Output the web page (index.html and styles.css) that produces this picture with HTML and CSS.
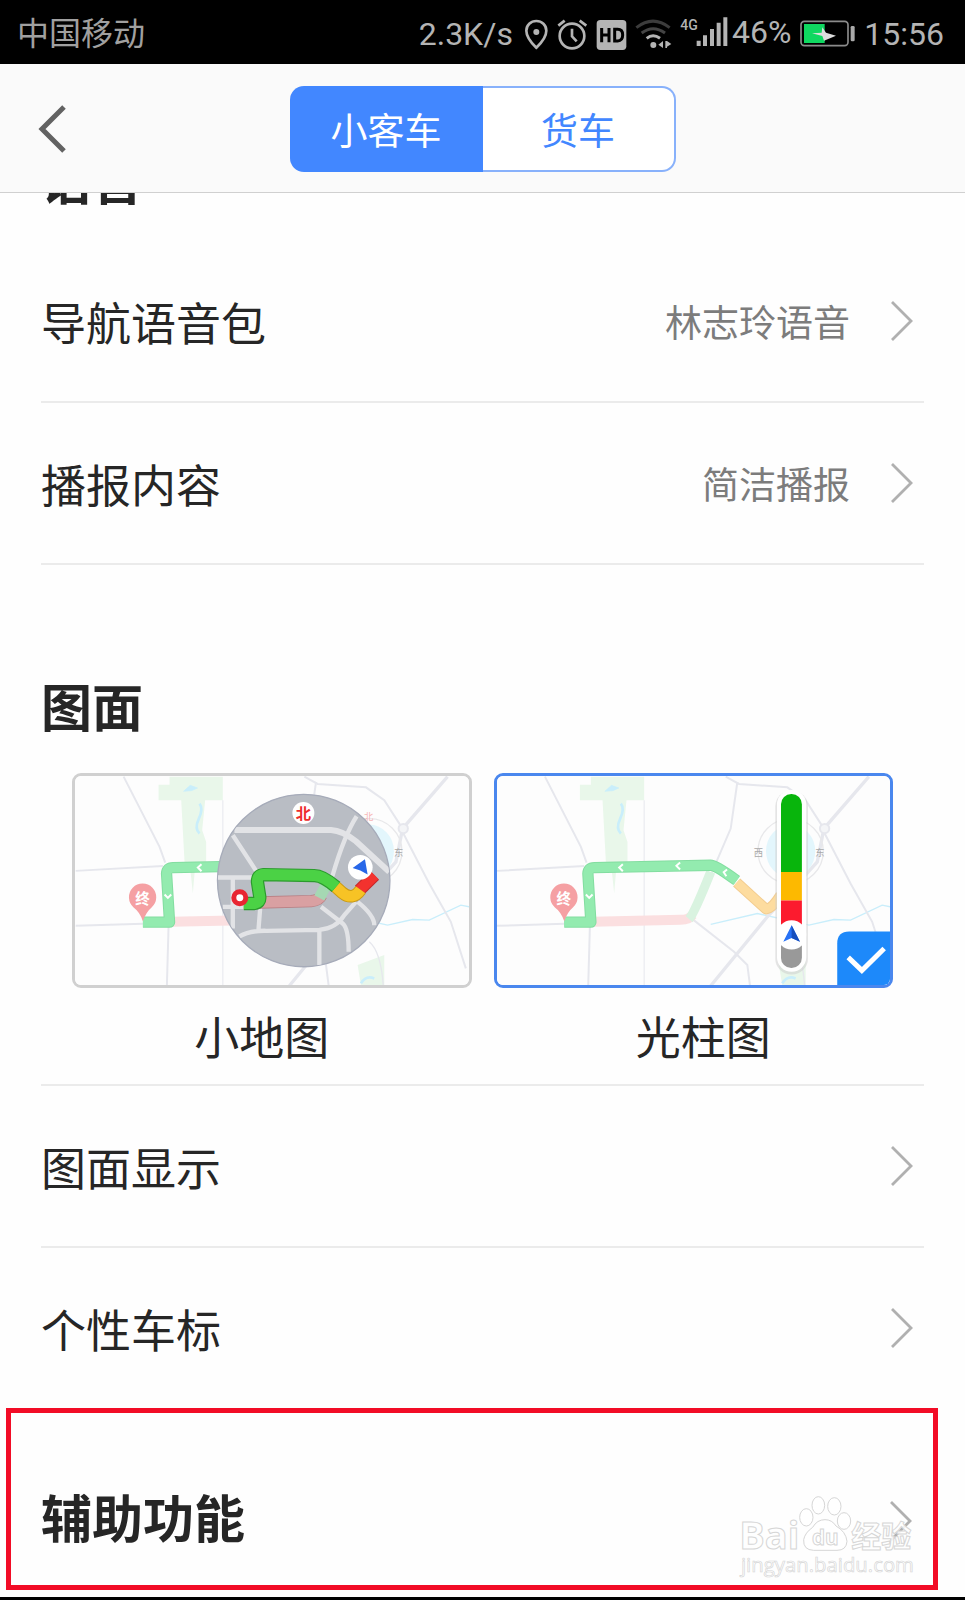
FILE: index.html
```html
<!DOCTYPE html>
<html lang="zh-CN">
<head>
<meta charset="utf-8">
<meta name="viewport" content="width=device-width, initial-scale=1">
<title>导航设置</title>
<link rel="stylesheet" href="styles.css">
</head>
<body>
<svg class="defs" aria-hidden="true">
  <defs>
    <symbol id="chevron" viewBox="0 0 24 44"><path d="M2 3 21 22 2 41" fill="none" stroke="currentColor" stroke-width="2.8"/></symbol>
    <g id="map-base">
      <rect x="39" y="27" width="1204" height="642" fill="#fdfdfd"/>
      <g fill="#e9f7ea">
        <path d="M330 34H490V105H437L428 195 440 230V290H408L400 385 390 290H375L365 105H297V58H330Z"/>
        <path d="M895 600 975 570V662H905Z"/>
      </g>
      <g fill="none" stroke="#c9eefb">
        <path d="M372 78 392 60 414 68 396 76Z" fill="#c9eefb" stroke-width="2"/>
        <path d="M420 115Q432 130 418 160T420 205" stroke-width="8"/>
        <path d="M905 655Q920 630 945 640" stroke-width="8"/>
        <path d="M690 478 830 445 985 480 1060 463 1110 465 1205 420 1230 425" stroke-width="4"/>
      </g>
      <g fill="none" stroke="#e6e7ed" stroke-width="6">
        <path d="M192 34 300 245 317 292M48 317 310 302M48 482 250 476M327 485 322 662M770 50 750 190 690 330 635 462 760 560 800 600 808 662"/>
        <path d="M735 34 775 56 920 66 975 105 1030 190M1030 200 1110 355 1175 470 1220 610"/>
        <path d="M1165 34 1030 190 1010 290 860 455 690 662" stroke-width="10"/>
        <path d="M490 105V662" stroke-width="3"/>
        <circle cx="1032" cy="190" r="14" fill="#f4f5f7"/>
        <path d="M930 530Q965 560 972 662" stroke-width="4"/>
      </g>
      <circle cx="930" cy="258" r="98" fill="none" stroke="#e8e8ea" stroke-width="4"/>
      <ellipse cx="930" cy="258" rx="74" ry="80" fill="#e3f6fc"/>
      <g fill="#aaa" font-size="28" text-anchor="middle">
        <text x="1018" y="271">东</text><text x="833" y="271">西</text>
      </g>
    </g>
    <g id="map-route">
      <path d="M335 470 600 464Q625 464 635 450" fill="none" stroke="#fbdfe0" stroke-width="30"/>
      <path d="M625 462Q640 445 690 320" fill="none" stroke="#d9f3e0" stroke-width="28"/>
      <path d="M768 352 856 432Q875 430 900 390" fill="none" stroke="#f3cd91" stroke-width="32" stroke-linejoin="round"/>
      <path d="M768 352 856 432Q875 430 900 390" fill="none" stroke="#fddc9f" stroke-width="26" stroke-linejoin="round"/>
      <path d="M250 471H330L321 325Q322 307 340 307L690 300Q705 300 768 346" fill="none" stroke="#83dda0" stroke-width="34" stroke-linejoin="round"/>
      <path d="M250 471H330L321 325Q322 307 340 307L690 300Q705 300 768 346" fill="none" stroke="#93ebaf" stroke-width="28" stroke-linejoin="round"/>
      <g fill="none" stroke="#fff" stroke-width="6"><path d="M426 297 415 307 426 318M598 292 587 302 598 313M739 313 729 321 737 333M315 388 325 398 335 388"/></g>
      <path d="M250 468Q240 440 222 427A41 41 0 1 1 276 427Q260 440 250 468Z" fill="#f5a0a3"/>
      <text x="249" y="418" fill="#fff" font-size="44" font-weight="700" text-anchor="middle">终</text>
    </g>
  </defs>
</svg>

<div class="status-bar">
  <span class="carrier">中国移动</span>
  <div class="status-items">
    <span class="speed">2.3K/s</span>
    <svg class="ic-pin" viewBox="372 48 75 96" aria-hidden="true"><path d="M409 137Q379 108 379 86A30 29 0 0 1 439 86Q439 108 409 137Z" fill="none" stroke="currentColor" stroke-width="8"/><circle cx="409" cy="90" r="9" fill="currentColor"/></svg>
    <svg class="ic-alarm" viewBox="474 48 93 96" aria-hidden="true"><g fill="none" stroke="currentColor" stroke-width="8"><circle cx="519" cy="102" r="37"/><path d="M519 80V103L533 118M478 71 497 56M542 56 562 71"/></g></svg>
    <svg class="ic-hd" viewBox="594 48 93 96" aria-hidden="true"><rect x="596" y="54" width="89" height="90" rx="11" fill="currentColor"/><g fill="none" stroke="#000" stroke-width="9"><path d="M611 78V121M633 78V121M611 99H633M650 82H659Q674 82 674 99T659 117H650Z"/></g></svg>
    <svg class="ic-wifi" viewBox="708 48 111 96" aria-hidden="true"><g fill="none" stroke-width="9"><path d="M712 77Q762 38 812 77" stroke="#3c3c3c"/><path d="M728 93Q762 67 798 93" stroke="#444"/><path d="M743 109Q762 94 783 109" stroke="currentColor"/></g><circle cx="763" cy="129" r="9" fill="currentColor"/><path d="M778 128 792 117V138ZM799 117H804V138H799ZM804 117 817 126 804 134Z" fill="currentColor"/></svg>
    <div class="cell">
      <svg class="ic-signal" viewBox="30 48 144 96" role="img" aria-label="4G"><text x="31" y="90" fill="currentColor" font-size="42" font-weight="500">4G</text><path d="M80 122H92V138H80ZM99 106H111V138H99ZM120 87H132V138H120ZM140 68H152V138H140ZM160 52H172V138H160Z" fill="currentColor"/></svg>
      <span>46%</span>
    </div>
    <svg class="ic-battery" viewBox="387 48 171 96" aria-hidden="true"><rect x="393" y="58" width="141" height="73" rx="10" fill="none" stroke="#8b8b8b" stroke-width="5"/><path d="M402 66H464V123H402Z" fill="#0fd860"/><rect x="542" y="72" width="12" height="46" rx="4" fill="#aaa"/><path d="M457 76 468 92 498 101 462 116 457 102 426 94 455 92Z" fill="#ddd"/></svg>
    <span>15:56</span>
  </div>
</div>

<header class="nav-bar">
  <button class="back" type="button" aria-label="返回"><svg viewBox="0 0 32 52" aria-hidden="true"><path d="M28 4 6 26 28 48" fill="none" stroke="currentColor" stroke-width="5"/></svg></button>
  <div class="tabs">
    <button class="tab tab-active" type="button" aria-pressed="true">小客车</button>
    <button class="tab" type="button" aria-pressed="false">货车</button>
  </div>
</header>

<main class="settings">
  <section class="group group-voice">
    <h2 class="title">语音</h2>
    <a class="row" href="#voice"><span>导航语音包</span><span class="value">林志玲语音</span><svg class="chevron" aria-hidden="true"><use href="#chevron"/></svg></a>
    <a class="row" href="#content"><span>播报内容</span><span class="value">简洁播报</span><svg class="chevron" aria-hidden="true"><use href="#chevron"/></svg></a>
  </section>

  <section class="group group-map">
    <h2 class="title">图面</h2>
    <div class="choices">
      <label class="choice">
        <input class="choice-input" type="radio" name="overview">
        <span class="card">
          <svg viewBox="46 32 1182 628" aria-hidden="true">
            <use href="#map-base"/><use href="#map-route"/>
            <text x="928" y="164" fill="#f7b7b7" font-size="28" text-anchor="middle">北</text>
            <clipPath id="disc"><circle cx="733" cy="346" r="258"/></clipPath>
            <circle cx="733" cy="346" r="259" fill="#b9bdc4" stroke="#a6abb9" stroke-width="4"/>
            <g clip-path="url(#disc)" fill="none" stroke="#e2e3e6" stroke-width="13">
              <path d="M525 194H815Q850 196 890 228L990 320" stroke-width="18"/>
              <path d="M892 153Q855 210 820 330L790 380M520 210 592 320M475 337H590M490 425H560M520 337V490M603 420 597 495M540 514Q570 496 620 497L780 494Q830 490 855 450L890 410M780 494V600M785 425 850 475Q868 490 868 560M895 410Q945 450 945 480"/>
            </g>
            <g fill="none" stroke-linejoin="round">
              <path d="M600 412 755 408Q780 405 785 392" stroke="#b98085" stroke-width="37"/><path d="M600 412 755 408Q780 405 785 392" stroke="#d9a0a2" stroke-width="32"/>
              <path d="M780 398 798 364" stroke="#a5d8b3" stroke-width="34"/>
              <path d="M900 375 946 330" stroke="#c4272a" stroke-width="38"/><path d="M900 375 946 330" stroke="#f3322e" stroke-width="32"/>
              <path d="M828 364 848 382Q880 408 904 374" stroke="#c99b16" stroke-width="38"/><path d="M828 364 848 382Q880 408 904 374" stroke="#f7c325" stroke-width="32"/>
              <path d="M553 415H585Q603 412 601 395L594 350Q594 329 612 328L765 331Q790 331 830 365" stroke="#2b9b2d" stroke-width="40"/><path d="M553 415H585Q603 412 601 395L594 350Q594 329 612 328L765 331Q790 331 830 365" stroke="#4bd245" stroke-width="33"/>
            </g>
            <circle cx="541" cy="398" r="18" fill="#fff" stroke="#e82632" stroke-width="15"/>
            <circle cx="903" cy="306" r="37" fill="#fff"/><path d="M880 308 917 282 925 328 903 316Z" fill="#2867e8"/>
            <circle cx="732" cy="143" r="33" fill="#fff"/><text x="732" y="160" fill="#ee2c2c" font-size="46" font-weight="700" text-anchor="middle">北</text>
          </svg>
        </span>
        <span class="choice-name">小地图</span>
      </label>
      <label class="choice">
        <input class="choice-input" type="radio" name="overview" checked>
        <span class="card card-selected">
          <svg viewBox="48 32 1182 628" aria-hidden="true">
            <use href="#map-base"/><use href="#map-route"/>
            <rect x="884" y="76" width="98" height="552" rx="48" fill="#ccc" opacity=".5"/>
            <rect x="889" y="74" width="88" height="546" rx="44" fill="#fff"/>
            <clipPath id="bar"><rect x="901" y="86" width="63" height="523" rx="31"/></clipPath>
            <g clip-path="url(#bar)"><path d="M901 86H964V320H901Z" fill="#08b50c"/><path d="M901 320H964V406H901Z" fill="#fdb900"/><path d="M901 406H964V500H901Z" fill="#fc1b2e"/><path d="M901 500H964V610H901Z" fill="#999"/></g>
            <circle cx="933" cy="509" r="44" fill="#fff"/><path d="M933 480 958 530 933 519 908 530Z" fill="#2872f5"/><path d="M933 480 958 530 933 519Z" fill="#174fbd"/>
            <path d="M1070 669V535Q1070 499 1106 499H1240V669Z" fill="#1d89fa"/><path d="M1103 577 1144 616 1211 550" fill="none" stroke="#fff" stroke-width="15"/>
          </svg>
        </span>
        <span class="choice-name">光柱图</span>
      </label>
    </div>
    <a class="row" href="#display"><span>图面显示</span><svg class="chevron" aria-hidden="true"><use href="#chevron"/></svg></a>
    <a class="row row-last" href="#marker"><span>个性车标</span><svg class="chevron" aria-hidden="true"><use href="#chevron"/></svg></a>
  </section>

  <section class="highlight">
    <a class="row-title" href="#assist"><h2 class="title">辅助功能</h2><svg class="chevron" aria-hidden="true"><use href="#chevron"/></svg></a>
    <svg class="watermark" viewBox="110 280 540 261" role="img" aria-label="Baidu经验">
      <g fill="#fff" fill-opacity=".85" stroke="#d6d6d6" stroke-width="3">
        <ellipse cx="318" cy="353" rx="20" ry="26"/><ellipse cx="354" cy="317" rx="19" ry="26"/><ellipse cx="402" cy="320" rx="20" ry="26"/><ellipse cx="431" cy="364" rx="20" ry="25"/>
        <path d="M374 360Q395 360 407 379Q437 396 440 425Q438 452 410 452H340Q308 451 310 420Q314 399 337 383Q350 360 374 360Z"/>
        <g font-weight="700"><text x="117" y="449" font-size="114">Bai</text><text x="335" y="437" font-size="62">du</text><text x="453" y="441" font-size="90">经验</text></g>
        <text x="122" y="516" font-size="61" stroke-width="2">jingyan.baidu.com</text>
      </g>
    </svg>
  </section>
</main>
</body>
</html>
```
FILE: styles.css
```css
* { box-sizing: border-box; }

body {
  margin: 0;
  min-height: 100vh;
  display: flex;
  flex-direction: column;
  background: #fefefe;
  color: #262626;
  font-family: Roboto, "Noto Sans CJK SC", sans-serif;
  border-bottom: 3px solid #000;
}

svg { display: block; }
.defs { position: absolute; width: 0; height: 0; }

.status-bar {
  height: 64px;
  padding: 3px 21px 0 17px;
  display: flex;
  align-items: center;
  justify-content: space-between;
  background: #000;
  color: #b4b4b4;
  font-size: 32px;
  line-height: 40px;
  white-space: nowrap;
}
.carrier { color: #a0a0a0; }
.status-items { display: flex; align-items: center; gap: 8px; }
.status-items svg { height: 32px; }
.speed { margin-right: 3px; }
.cell { display: flex; align-items: center; gap: 4px; padding-bottom: 4px; }
.ic-pin { width: 25px; }
.ic-alarm { width: 31px; }
.ic-hd { width: 31px; }
.ic-wifi { width: 37px; }
.ic-signal { width: 48px; }
.ic-battery { width: 57px; }

.nav-bar {
  position: relative;
  z-index: 1;
  height: 129px;
  padding: 2px 32px 0;
  display: grid;
  grid-template-columns: 1fr 386px 1fr;
  align-items: center;
  background: #fafafa;
  border-bottom: 1px solid #d0d0d0;
}
.back {
  width: 40px;
  padding: 0 0 0 4px;
  border: 0;
  background: none;
  color: #626262;
}
.back svg { width: 32px; height: 52px; }
.tabs {
  display: grid;
  grid-template-columns: 1fr 1fr;
  height: 86px;
}
.tab {
  padding: 0;
  border: 2px solid #88b1fb;
  border-left: 0;
  border-radius: 0 14px 14px 0;
  background: #fff;
  color: #4287ff;
  font: inherit;
  font-size: 37px;
}
.tab-active {
  border: 0;
  border-radius: 14px 0 0 14px;
  background: #4287ff;
  color: #fff;
}

.settings { flex: 1; background: #fefefe; }
.group { padding: 0 41px; }
.title { margin: 0; font-size: 51px; line-height: 60px; font-weight: 700; }
.group-voice .title { margin: -40px 0 28px; }
.group-map .title { margin-bottom: 33px; }
.group-map { padding-top: 115px; }

.row {
  display: flex;
  align-items: center;
  height: 162px;
  padding-right: 10px;
  border-bottom: 2px solid #ebebeb;
  color: inherit;
  text-decoration: none;
  font-size: 45px;
}
.row-last { height: 160px; border-bottom: 0; }
.value { margin-left: auto; margin-right: 40px; color: #7c7c7c; font-size: 37px; }
.chevron { width: 24px; height: 44px; flex: none; color: #b0b0b0; }
span:not(.value) + .chevron, .title + .chevron { margin-left: auto; }

.choices { display: grid; grid-template-columns: 1fr 1fr; border-bottom: 2px solid #ebebeb; }
.choice { position: relative; display: flex; flex-direction: column; }
.choice-input { position: absolute; opacity: 0; }
.card {
  margin: 0 11px 0 31px;
  overflow: hidden;
  border: 3px solid #d0d0d0;
  border-radius: 9px;
}
.choice + .choice .card { margin: 0 31px 0 11px; }
.card-selected { border-color: #4a87ee; }
.card svg { width: 100%; }
.choice-name { padding: 18px 0 10px; text-align: center; font-size: 45px; line-height: 68px; }

.highlight {
  position: relative;
  margin: 0 27px 7px 6px;
  padding: 78px 20px 34px 30px;
  border: 5px solid #f20c26;
}
.row-title { display: flex; align-items: center; color: inherit; text-decoration: none; }
.watermark { position: absolute; right: 16px; bottom: 5px; width: 180px; font-family: "Open Sans", "Noto Sans CJK SC", sans-serif; }
```
